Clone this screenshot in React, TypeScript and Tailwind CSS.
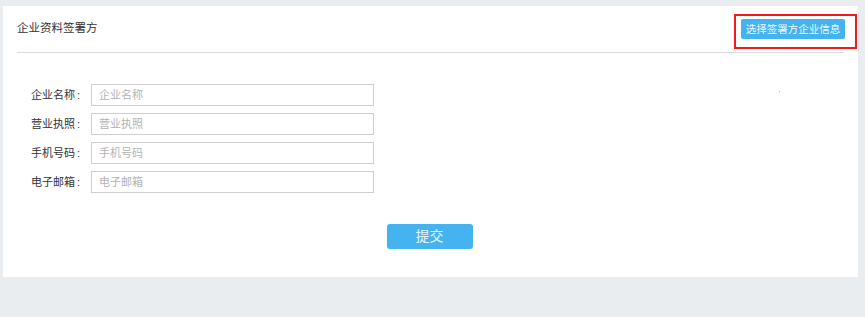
import React from "react";

const fields = [
  { label: "企业名称", placeholder: "企业名称" },
  { label: "营业执照", placeholder: "营业执照" },
  { label: "手机号码", placeholder: "手机号码" },
  { label: "电子邮箱", placeholder: "电子邮箱" },
];

const App = () => {
  return (
    <div
      className="w-[865px] h-[317px] bg-[#e9edf0] pt-[6px] pl-[3px] pr-[7px]"
      style={{ fontFamily: '"Liberation Sans", "Noto Sans CJK SC", sans-serif' }}
    >
      <div className="relative bg-white h-[271px] px-[14px]">
        {/* header */}
        <div className="flex justify-between items-center h-[47px] border-b border-[#dcdcdc]">
          <span className="text-[11.5px] text-[#333]">企业资料签署方</span>
          <button className="relative h-[20px] w-[104px] mr-[-1px] rounded-[2px] bg-[#45b3ef] text-white/95 text-[10.5px] leading-[20px] whitespace-nowrap">
            选择签署方企业信息
            <span className="absolute left-[-7px] top-[-5px] w-[123px] h-[35px] border-2 border-[#f21b1b] pointer-events-none" />
          </button>
        </div>

        <span className="absolute left-[776px] top-[85px] w-[1px] h-[1px] bg-[#f4a0a0]" />

        {/* form */}
        <div className="flex flex-col gap-[7px] pt-[31px]">
          {fields.map((f) => (
            <div key={f.label} className="flex items-center">
              <label className="w-[74px] pr-[2px] flex justify-end text-[11px] text-[#333]">
                {f.label}
                <span className="ml-[2px] mr-[9px]">:</span>
              </label>
              <input
                placeholder={f.placeholder}
                className="w-[283px] h-[22px] border border-[#cfcfcf] px-[7px] text-[11px] outline-none placeholder:text-[#b3b3b3]"
              />
            </div>
          ))}
        </div>

        <div className="flex justify-center pt-[31px] pr-[2px]">
          <button className="w-[86px] h-[25px] rounded-[3px] bg-[#45b3ef] text-[14px] text-white/85">
            提交
          </button>
        </div>
      </div>
    </div>
  );
};

export default App;
